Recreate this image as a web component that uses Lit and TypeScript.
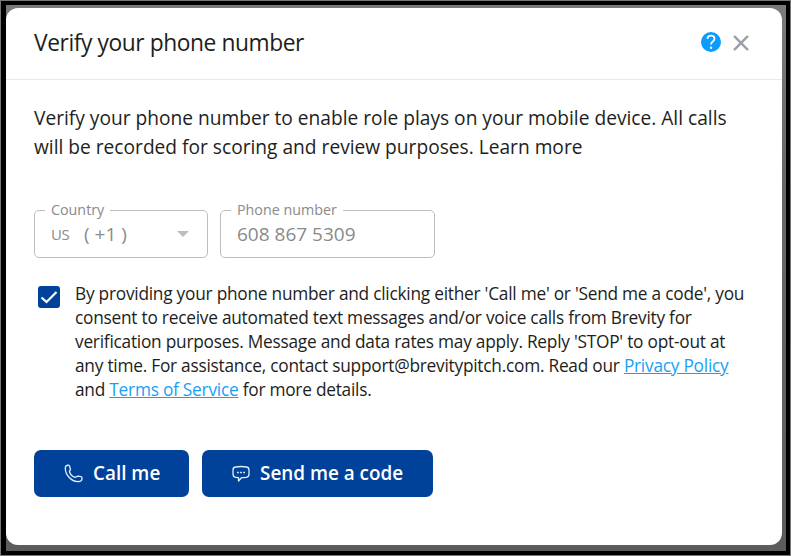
import { LitElement, html, css } from "lit";
import { customElement } from "lit/decorators.js";

@customElement("app-root")
export class AppRoot extends LitElement {
  static styles = css`
    :host { display: block; height: 556px; box-sizing: border-box; padding: 1px; background: #777; font-family: "Open Sans", "Noto Sans", sans-serif; color: #1d1e20; }
    * { box-sizing: border-box; }
    .frame { height: 554px; border: 5px solid #000; border-right-width: 4px; border-top-width: 4px; border-bottom-width: 4px; background: linear-gradient(#7b7b7b, #686868 30%, #5c5c5c); padding: 3px 4px 0 0; }
    .card { width: 776px; height: 537px; border-radius: 12px; background: #fff; }
    header { height: 72px; border-bottom: 1px solid #e9e9e9; padding: 0 33px 0 28px; display: flex; align-items: center; }
    h1 { margin: -1px 0 0; flex: 1; font-size: 22.8px; letter-spacing: -.43px; font-weight: 400; line-height: 30px; white-space: nowrap; }
    .help { width: 20px; height: 20px; margin: -3px 12px 0 0; }
    .close { width: 16px; height: 16px; margin-top: -1px; }
    main { padding: 24px 28px 0; }
    p { margin: 0; white-space: nowrap; }
    p span { display: block; width: max-content; }
    .intro { font-size: 19.17px; line-height: 29px; }
    .fields { display: flex; gap: 12px; margin-top: 38px; }
    fieldset { margin: 0; min-width: 0; height: 58px; padding: 0 16px 0 10px; border: 1px solid #bdbdbd; border-radius: 5px; color: #8a8a8a; }
    legend { padding: 0 6px; font-size: 14.3px; line-height: 20px; }
    .country { width: 174px; }
    .phone { width: 215px; }
    .value { display: flex; align-items: center; padding-left: 6px; font-size: 19px; line-height: 26px; height: 27px; white-space: pre; }
    .value small { font-size: 15px; width: 33px; letter-spacing: -.5px; }
    .value svg { margin: 0 2px 0 auto; }
    .consent { display: flex; margin-top: 24px; }
    .box { width: 22px; height: 22px; margin: 4px 15px 0 4px; border-radius: 3px; background: #004299; flex: none; }
    .terms { font-size: 17.3px; letter-spacing: -.24px; line-height: 24px; }
    a { color: #1a9ff5; text-decoration: underline; }
    .actions { display: flex; gap: 13px; margin-top: 48px; }
    button { height: 47px; padding: 0; border: 0; border-radius: 7px; background: #004299; color: #fff; font: 600 18.9px/26px "Open Sans", sans-serif; display: flex; align-items: center; white-space: nowrap; }
    button span { margin-top: -2px; }
    button svg { margin: 0 10px 0 30px; flex: none; }
    .call { width: 155px; }
    .code { width: 231px; }
    svg { display: block; }
  `;

  render() {
    return html`
      <div class="frame"><section class="card">
        <header>
          <h1><span>Verify your phone number</span></h1>
          <svg class="help" viewBox="0 0 20 20" fill="none"><circle cx="10" cy="10" r="10" fill="#0a9dff"/><path d="M6.500 7C6.500 4.800 8 3.700 10 3.700c2.100 0 3.500 1.200 3.500 3 0 2.600-3.500 2.900-3.500 5.800" stroke="#fff" stroke-width="1.800"/><circle cx="10" cy="15.700" r="1.200" fill="#fff"/></svg>
          <svg class="close" viewBox="0 0 16 16" fill="none" stroke="#9aa0ab" stroke-width="2.400" stroke-linecap="round"><path d="M1.700 1.700 14.300 14.300M14.300 1.700 1.700 14.300"/></svg>
        </header>
        <main>
          <p class="intro"><span>Verify your phone number to enable role plays on your mobile device. All calls</span><span>will be recorded for scoring and review purposes. Learn more</span></p>
          <div class="fields">
            <fieldset class="country"><legend>Country</legend><div class="value"><small>US</small>( +1 )<svg width="12" height="6" viewBox="0 0 12 6"><path d="M0 0H12L6 6Z" fill="#bdbdbd"/></svg></div></fieldset>
            <fieldset class="phone"><legend>Phone number</legend><div class="value">608 867 5309</div></fieldset>
          </div>
          <div class="consent">
            <svg class="box" viewBox="0 0 22 22" fill="none"><path d="m3.500 11.500 5 4.500L18.500 6" stroke="#fff" stroke-width="2.200"/></svg>
            <p class="terms"><span>By providing your phone number and clicking either 'Call me' or 'Send me a code', you</span><span>consent to receive automated text messages and/or voice calls from Brevity for</span><span>verification purposes. Message and data rates may apply. Reply 'STOP' to opt-out at</span><span>any time. For assistance, contact support@brevitypitch.com. Read our <a>Privacy Policy</a></span><span>and <a>Terms of Service</a> for more details.</span></p>
          </div>
          <div class="actions">
            <button class="call"><svg width="19" height="19" viewBox="0 0 19 19" fill="none" stroke="#e4eefa" stroke-width="1.300" stroke-linejoin="round"><path d="M1.500 2.800C2 1.100 4.900.6 5.500 2L6.400 5.200C6.700 6.300 5.200 6.700 5.500 7.700c.7 2.500 3 4.800 5.500 5.700 1 .3 1.700-1.300 2.800-1.200l3.200.5c1.700.5 1.200 3.700-.5 4.400C9 19.500.2 11 1.500 2.800Z"/></svg><span>Call me</span></button>
            <button class="code"><svg width="18" height="18" viewBox="0 0 18 18" fill="none" stroke="#e4eefa" stroke-width="1.300" stroke-linejoin="round"><path d="M3.500 2Q9 1 14.500 2 17 2.300 17 5v4q0 3-2.500 3.300-3 .4-5 .4L6.500 16v-3.300l-3-.4Q1 12 1 9V5Q1 2.300 3.500 2Z"/><path d="M5 7.500h1.800m1.300 0h1.800m1.300 0h1.800" stroke-width="1.700"/></svg><span>Send me a code</span></button>
          </div>
        </main>
      </section></div>`;
  }
}
